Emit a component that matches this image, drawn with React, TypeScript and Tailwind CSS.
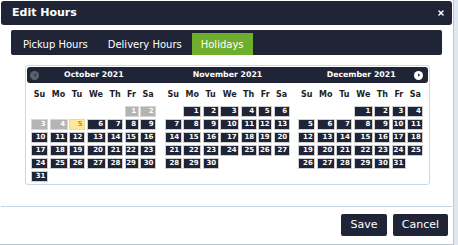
import { X } from "lucide-react";

type Month = { title: string; start: number; days: number; past?: number; today?: number };

const months: Month[] = [
  { title: "October 2021", start: 5, days: 31, past: 4, today: 5 },
  { title: "November 2021", start: 1, days: 30 },
  { title: "December 2021", start: 3, days: 31 },
];

const dayNames = ["Su", "Mo", "Tu", "We", "Th", "Fr", "Sa"];

function dayClass(m: Month, d: number) {
  if (m.past && d <= m.past) return "bg-[#b4b4b4] border-[#d6d6d6] text-white";
  if (m.today === d) return "bg-[#fbe89b] border-[#f3dc84] text-[#c98f1e]";
  return "bg-[#1f2536] border-[#cfcfcf] text-white";
}

function MonthGrid({ m }: { m: Month }) {
  const blanks = Array.from({ length: m.start });
  const days = Array.from({ length: m.days }, (_, i) => i + 1);
  return (
    <div className="px-[4px]">
      <div className="grid grid-cols-[17px_18px_16px_19px_16px_14px_16px] gap-x-[1.5px] gap-y-[2px] mt-[3px]">
        {dayNames.map((n) => (
          <div key={n} className="h-[18px] flex items-center justify-center text-[8px] font-bold text-[#222]">{n}</div>
        ))}
        {blanks.map((_, i) => <div key={"b" + i} />)}
        {days.map((d) => (
          <div key={d} className={`h-[11px] border flex items-center justify-end pr-[1.5px] text-[7px] font-bold leading-none ${dayClass(m, d)}`}>{d}</div>
        ))}
      </div>
    </div>
  );
}

export default function App() {
  return (
    <div className="w-[458px] h-[245px] bg-[#dfe8f0] flex font-['DejaVu_Sans',sans-serif]">
      <div className="w-[454px] h-[245px] bg-white border-r border-b border-[#b9c6d3] flex flex-col">
        <div className="mx-[1px] mt-[1px] h-[24px] rounded-[3px] bg-[#1f2536] flex items-center justify-between pl-[11px] pr-[7px]">
          <span className="text-[11px] font-bold text-white">Edit Hours</span>
          <X className="w-[8px] h-[8px] text-white" strokeWidth={4.5} />
        </div>

        <div className="mt-[5px] ml-[11px] w-[431px] h-[25px] rounded-[2px] bg-[#1f2536] flex items-end pl-[2px]">
          <div className="h-[22px] flex items-center px-[10px] text-[10px] text-white">Pickup Hours</div>
          <div className="h-[22px] flex items-center px-[10px] text-[10px] text-white">Delivery Hours</div>
          <div className="h-[22px] flex items-center px-[9px] bg-[#6fae2c] text-[10px] text-white">Holidays</div>
        </div>

        <div className="mt-[10px] ml-[25px] w-[405px] border border-[#c5dbec] rounded-[3px] p-[1px] pb-[2px]">
          <div className="h-[16px] rounded-[3px] bg-[#1f2536] grid grid-cols-3">
            {months.map((m, i) => (
              <div key={m.title} className="relative flex items-center justify-center text-[7.8px] font-bold text-white">
                {i === 0 && (
                  <span className="absolute left-[3px] top-[3.5px] w-[9px] h-[9px] rounded-full bg-[#5a606c] flex items-center justify-center">
                    <svg viewBox="0 0 10 10" className="w-[6px] h-[6px]"><path d="M6.5 2 L3 5 L6.5 8 Z" fill="#2a3040" /></svg>
                  </span>
                )}
                {i === 2 && (
                  <span className="absolute right-[5px] top-[3.5px] w-[9px] h-[9px] rounded-full bg-white flex items-center justify-center">
                    <svg viewBox="0 0 10 10" className="w-[6px] h-[6px]"><path d="M3.5 2 L7 5 L3.5 8 Z" fill="#1f2536" /></svg>
                  </span>
                )}
                {m.title}
              </div>
            ))}
          </div>
          <div className="grid grid-cols-3">
            {months.map((m) => <MonthGrid key={m.title} m={m} />)}
          </div>
        </div>

        <div className="mt-[21px] mx-[1px] border-t border-[#c9d6e3] pt-[7px] flex justify-end gap-[6px] pr-[4px]">
          <button className="w-[46px] h-[22px] rounded-[2px] bg-[#1f2536] text-[11px] text-white">Save</button>
          <button className="w-[55px] h-[22px] rounded-[2px] bg-[#1f2536] text-[11px] text-white">Cancel</button>
        </div>
      </div>
    </div>
  );
}
